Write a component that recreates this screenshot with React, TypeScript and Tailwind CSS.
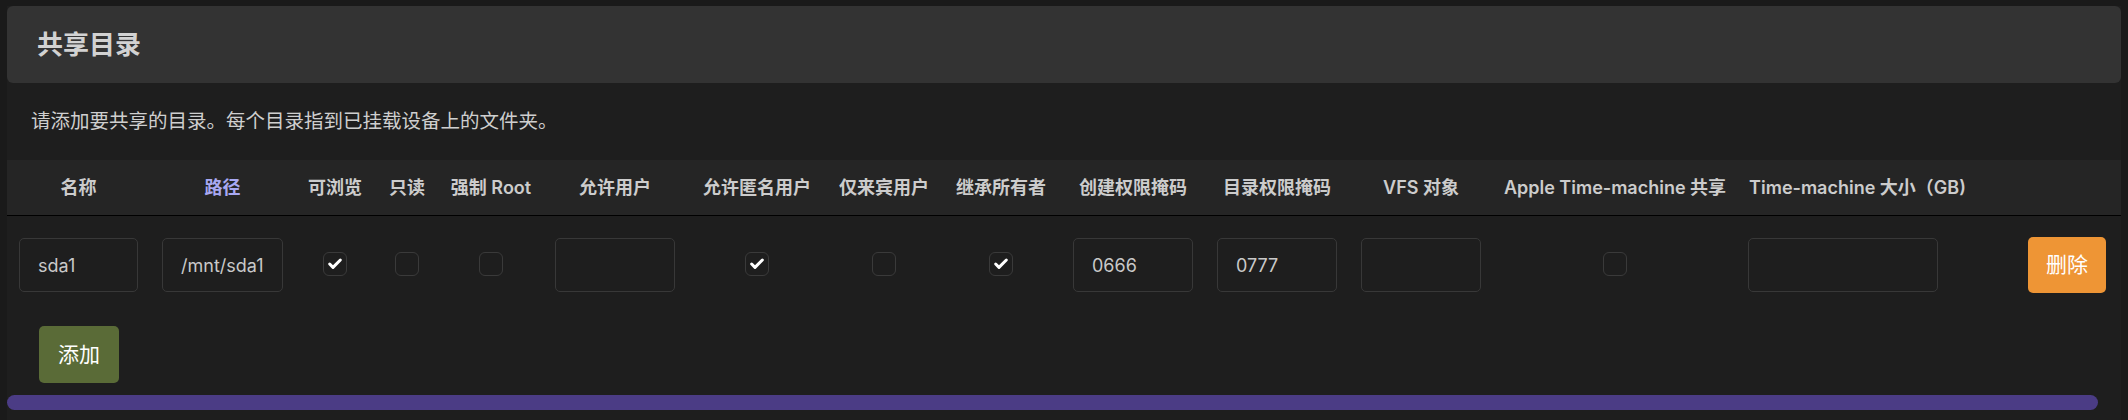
import { Check } from "lucide-react"

const cols =
  "grid grid-cols-[143px_145px_80px_64px_104px_144px_140px_114px_120px_144px_144px_144px_244px_241px_1fr]"

const heads = [
  "名称",
  "路径",
  "可浏览",
  "只读",
  "强制 Root",
  "允许用户",
  "允许匿名用户",
  "仅来宾用户",
  "继承所有者",
  "创建权限掩码",
  "目录权限掩码",
  "VFS 对象",
  "Apple Time-machine 共享",
  "Time-machine 大小（GB)",
  "",
]

const Box = ({ on }: { on?: boolean }) => (
  <div className="w-6 h-6 rounded-[6px] border border-[#3a3a3a] flex items-center justify-center">
    {on && <Check className="w-4 h-4 text-white" strokeWidth={4.5} />}
  </div>
)

const Field = ({ value, wide }: { value?: string; wide?: boolean }) => (
  <div
    className={`${wide ? "w-[190px]" : "w-full"} h-[54px] rounded-[5px] border border-[#383838] flex items-center px-[18px] text-[18px] text-[#c9c9c9] overflow-hidden whitespace-nowrap`}
  >
    {value}
  </div>
)

export default function App() {
  return (
    <div
      className="w-[2128px] h-[420px] bg-[#1a1a1a] pl-[7px] pr-[7px] pt-[6px]"
      style={{ fontFamily: "Inter, 'Noto Sans CJK SC', sans-serif" }}
    >
      <div className="bg-[#1e1e1e] h-[414px] flex flex-col">
        <div className="h-[77px] bg-[#333333] rounded-[6px] flex items-center pl-[30px]">
          <div className="text-[26px] font-bold text-[#d2d2d2]">共享目录</div>
        </div>

        <div className="pl-[24px] pt-[25px] text-[19.5px] text-[#cfcfcf] leading-[26px]">
          请添加要共享的目录。每个目录指到已挂载设备上的文件夹。
        </div>

        <div className={`${cols} mt-[26px] h-[56px] bg-[#252525] border-b border-black items-center`}>
          {heads.map((h, i) => (
            <div
              key={i}
              className={`text-center text-[18px] font-semibold whitespace-nowrap ${i === 1 ? "text-[#a8a8f2]" : "text-[#cccccc]"}`}
            >
              {h}
            </div>
          ))}
        </div>

        <div className={`${cols} pt-[22px] h-[98px] items-start`}>
          <div className="px-3"><Field value="sda1" /></div>
          <div className="px-3"><Field value="/mnt/sda1" /></div>
          <div className="flex justify-center pt-[14px]"><Box on /></div>
          <div className="flex justify-center pt-[14px]"><Box /></div>
          <div className="flex justify-center pt-[14px]"><Box /></div>
          <div className="px-3"><Field /></div>
          <div className="flex justify-center pt-[14px]"><Box on /></div>
          <div className="flex justify-center pt-[14px]"><Box /></div>
          <div className="flex justify-center pt-[14px]"><Box on /></div>
          <div className="px-3"><Field value="0666" /></div>
          <div className="px-3"><Field value="0777" /></div>
          <div className="px-3"><Field /></div>
          <div className="flex justify-center pt-[14px]"><Box /></div>
          <div className="pl-[11px]"><Field wide /></div>
          <div className="flex justify-end pr-[15px] -mt-[1px]">
            <button className="w-[78px] h-[56px] rounded-[5px] bg-[#ee9535] text-white text-[21px]">删除</button>
          </div>
        </div>

        <div className="pl-[32px] pt-[12px]">
          <button className="w-[80px] h-[57px] rounded-[5px] bg-[#5a6b37] text-white text-[21px]">添加</button>
        </div>

        <div className="mt-[12px] h-[15px] w-[2091px] rounded-full bg-[#4b3c85]" />
      </div>
    </div>
  )
}
